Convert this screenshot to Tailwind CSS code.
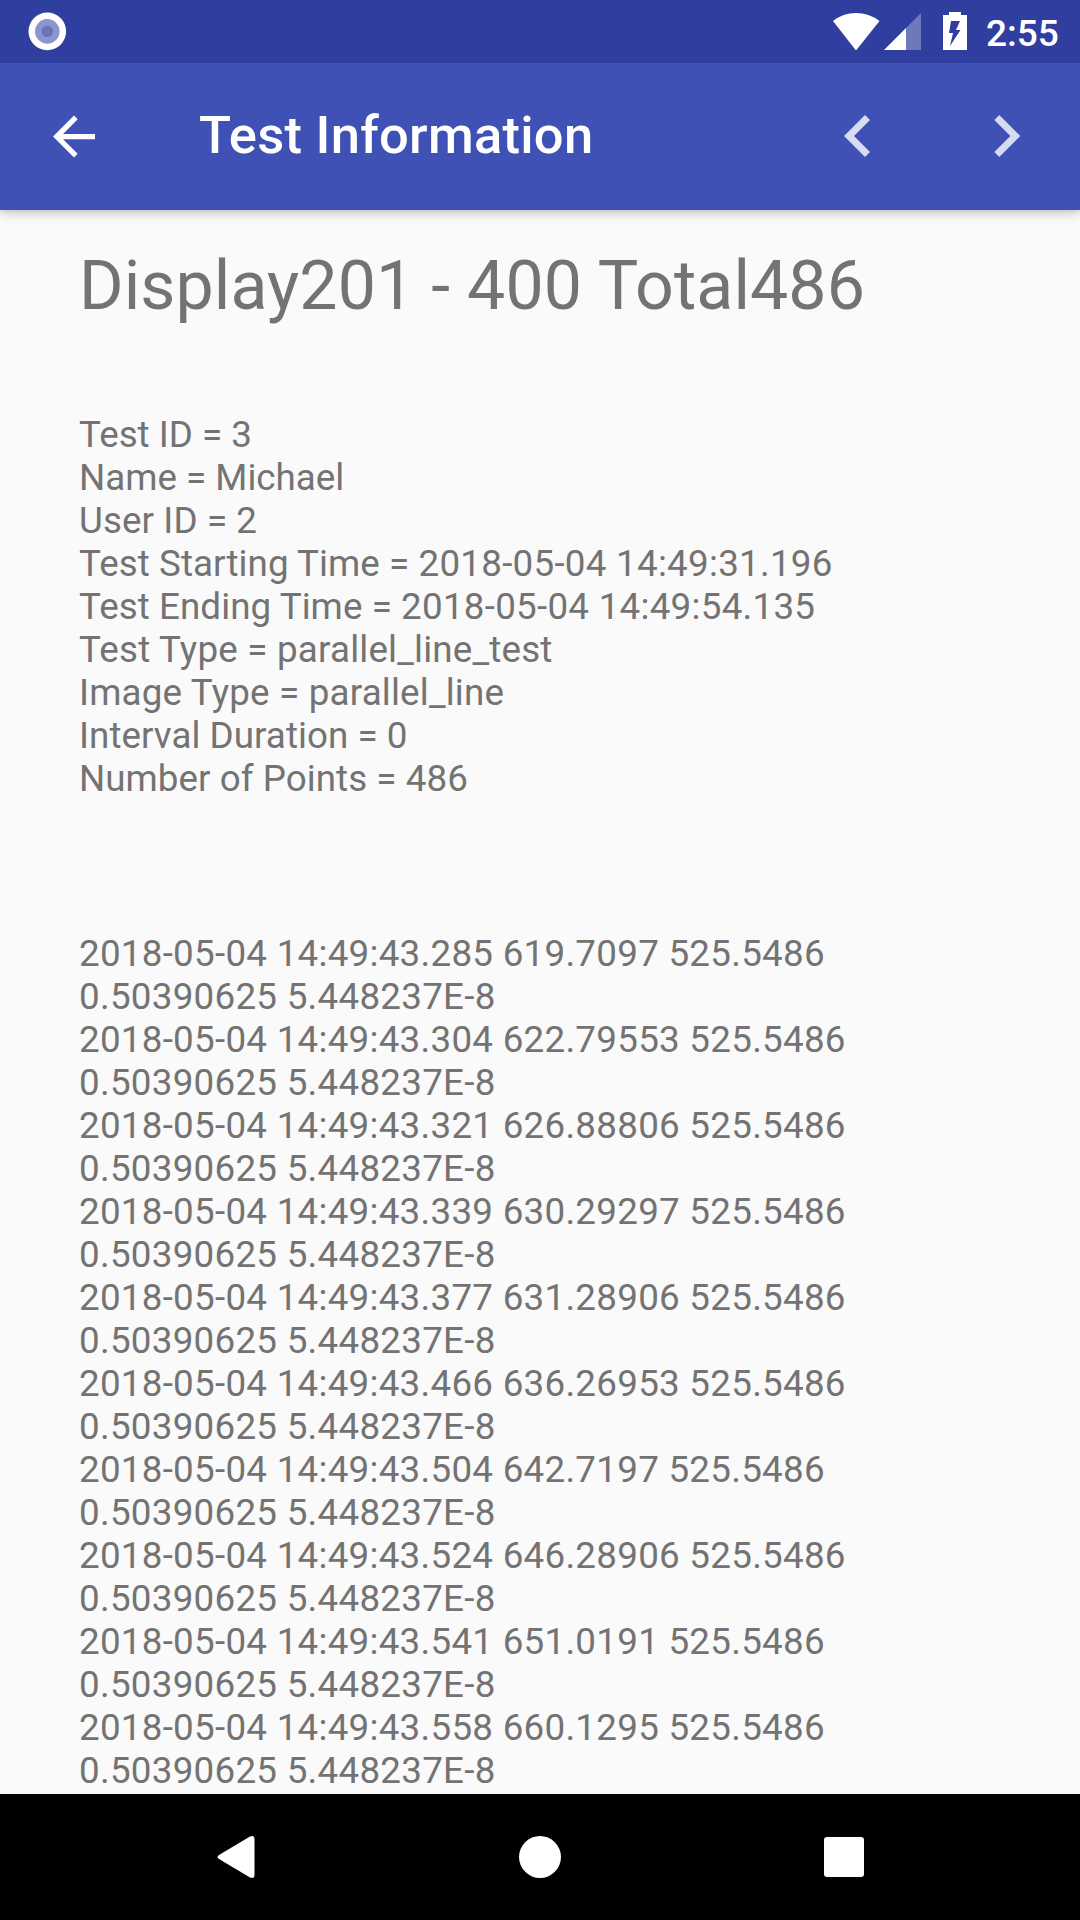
<!DOCTYPE html>
<html lang="en"><head><meta charset="utf-8"><title>Test Information</title>
<script src="https://cdn.jsdelivr.net/npm/@tailwindcss/browser@4"></script></head>
<body class="bg-[#fafafa]">
<div class="w-[1080px] h-[1920px] flex flex-col overflow-hidden font-['Roboto',sans-serif] text-[#737373]">
<header class="relative z-10 h-[63px] shrink-0 bg-[#303f9f] flex items-center justify-between text-white">
<svg class="w-[94px] h-[63px]" viewBox="0 0 94 63"><circle cx="47.300" cy="31.400" r="18.800" fill="#fff"/><circle cx="47.300" cy="31.400" r="12.300" fill="#8c95cc"/><circle cx="47.300" cy="31.400" r="5.700" fill="#6973bb"/></svg>
<div class="flex items-center h-full"><svg class="w-[150px] h-[63px]" viewBox="0 0 150 63"><path d="M2 21Q12 13 25 13T48.500 21L25 50.500Z" fill="#fff"/><path d="M75 28L90 13V50H75Z" fill="#fff" fill-opacity=".3"/><path d="M53 50L75 28V50Z" fill="#fff"/><path d="M112 15H118V12H130V15H136V50H112Z" fill="#fff"/><path d="M120 21H129L125 30H129.500L119 46L122 33H118Z" fill="#303f9f"/></svg><div class="w-[99px] pl-[5px] pt-1 text-[37px] font-medium leading-[59px]">2:55</div></div>
</header>
<div class="relative h-[147px] shrink-0 bg-[#3f51b5] flex items-center text-white shadow-[0_3px_10px_rgba(0,0,0,0.22),0_0_3px_rgba(0,0,0,0.1)]">
<svg class="w-[199px] h-[147px]" viewBox="0 0 199 147"><path transform="translate(42.500 42) scale(2.625)" d="M20 11H7.830l5.590-5.590L12 4l-8 8 8 8 1.410-1.410L7.830 13H20z" fill="#fff"/></svg>
<h1 class="text-[52.5px] font-medium leading-[60px] tracking-[0.27px] grow pb-[3px]">Test Information</h1>
<svg class="w-[300px] h-[147px]" viewBox="780 63 300 147"><path d="M867.500 117.500L849 136L867.500 154.500M996.800 117.500L1015.300 136L996.800 154.500" fill="none" stroke="#fff" stroke-opacity=".8" stroke-width="7"/></svg>
</div>
<main class="grow min-h-0 overflow-hidden pl-[79px] pt-[36px]">
<h2 class="text-[68px] leading-[80px] tracking-[0.1px]">Display201 - 400 Total486</h2>
<div class="pt-[87px] text-[36.75px] leading-[43px]">
<p>Test ID = 3</p>
<p>Name = Michael</p>
<p class="tracking-[0.1px]">User ID = 2</p>
<p class="tracking-[0.06px]">Test Starting Time = <span class="tracking-[0.27px]">2018-05-04 14:49:31.196</span></p>
<p class="tracking-[0.06px]">Test Ending Time = <span class="tracking-[0.27px]">2018-05-04 14:49:54.135</span></p>
<p class="tracking-[0.2px]">Test Type = parallel_line_test</p>
<p class="tracking-[0.19px]">Image Type = parallel_line</p>
<p class="tracking-[0.05px]">Interval Duration = 0</p>
<p class="tracking-[0.05px]">Number of Points = 486</p></div>
<div class="pt-[132px] text-[36.75px] leading-[43px] tracking-[0.27px] whitespace-pre">2018-05-04 14:49:43.285 619.7097 525.5486
0.50390625 5.448237E-8
2018-05-04 14:49:43.304 622.79553 525.5486
0.50390625 5.448237E-8
2018-05-04 14:49:43.321 626.88806 525.5486
0.50390625 5.448237E-8
2018-05-04 14:49:43.339 630.29297 525.5486
0.50390625 5.448237E-8
2018-05-04 14:49:43.377 631.28906 525.5486
0.50390625 5.448237E-8
2018-05-04 14:49:43.466 636.26953 525.5486
0.50390625 5.448237E-8
2018-05-04 14:49:43.504 642.7197 525.5486
0.50390625 5.448237E-8
2018-05-04 14:49:43.524 646.28906 525.5486
0.50390625 5.448237E-8
2018-05-04 14:49:43.541 651.0191 525.5486
0.50390625 5.448237E-8
2018-05-04 14:49:43.558 660.1295 525.5486
0.50390625 5.448237E-8</div>
</main>
<nav class="h-[126px] shrink-0 bg-black"><svg class="w-full h-full" viewBox="0 0 1080 126" fill="#fff"><path d="M219 61L250 42.500Q254.500 41 254.500 45V81Q254.500 85 250 83.500L219 65Q216 63 219 61Z"/><circle cx="540" cy="63" r="21"/><rect x="824" y="43" width="40" height="40" rx="3"/></svg></nav>
</div></body></html>
